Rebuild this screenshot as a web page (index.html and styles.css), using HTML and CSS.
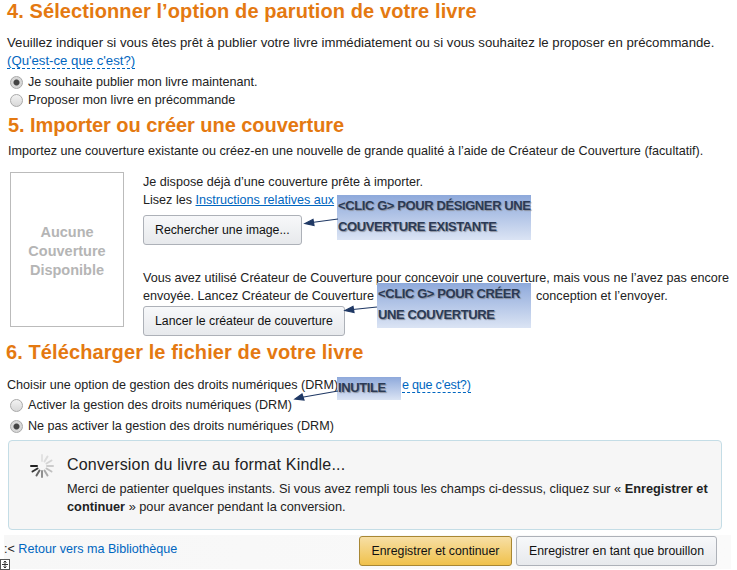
FILE: index.html
```html
<!DOCTYPE html>
<html>
<head>
    <meta charset="utf-8">
    <title>Publier votre livre</title>
    <link rel="stylesheet" href="styles.css">
</head>
<body>
    <div class="page">
        <h2 class="step step-four">4. Sélectionner l’option de parution de votre livre</h2>
        <p class="intro">Veuillez indiquer si vous êtes prêt à publier votre livre immédiatement ou si vous souhaitez le proposer en précommande.<br><a class="help" href="#">(Qu'est-ce que c'est?)</a></p>
        <label class="option"><span class="radio checked"></span>Je souhaite publier mon livre maintenant.</label>
        <label class="option"><span class="radio"></span>Proposer mon livre en précommande</label>

        <h2 class="step step-five">5. Importer ou créer une couverture</h2>
        <p class="intro-cover">Importez une couverture existante ou créez-en une nouvelle de grande qualité à l’aide de Créateur de Couverture (facultatif).</p>
        <div class="cover-row">
            <div class="cover-box">Aucune<br>Couverture<br>Disponible</div>
            <div class="cover-actions">
                <p>Je dispose déjà d’une couverture prête à importer.<br>Lisez les <a class="link" href="#">Instructions relatives aux</a></p>
                <button class="btn">Rechercher une image...</button>
                <p class="second">Vous avez utilisé Créateur de Couverture pour concevoir une couverture, mais vous ne l’avez pas encore<br>envoyée. Lancez Créateur de Couverture<span class="gap gap-create"></span>conception et l’envoyer.</p>
                <button class="btn btn-create">Lancer le créateur de couverture</button>
            </div>
        </div>

        <h2 class="step step-six">6. Télécharger le fichier de votre livre</h2>
        <p class="intro-drm">Choisir une option de gestion des droits numériques (DRM)<span class="gap gap-drm"></span><a class="help help-cut" href="#">e que c'est?)</a></p>
        <label class="option"><span class="radio"></span>Activer la gestion des droits numériques (DRM)</label>
        <label class="option option-last"><span class="radio checked"></span>Ne pas activer la gestion des droits numériques (DRM)</label>

        <div class="notice">
            <svg class="spinner" width="26" height="26" viewBox="0 0 26 26">
                <g stroke-width="2" stroke-linecap="round" fill="none">
                    <path d="M13 2v6" stroke="#e2e2e2"/>
                    <path d="M18.5 3.5l-3 5" stroke="#dcdcdc"/>
                    <path d="M22.5 7.500l-5 3" stroke="#d4d4d4"/>
                    <path d="M24 13h-6" stroke="#cccccc"/>
                    <path d="M22.500 18.500l-5-3" stroke="#c0c0c0"/>
                    <path d="M18.500 22.500l-3-5" stroke="#aaaaaa"/>
                    <path d="M13 24v-6" stroke="#909090"/>
                    <path d="M7.500 22.500l3-5" stroke="#666666"/>
                    <path d="M3.500 18.500l5-3" stroke="#333333"/>
                    <path d="M2 13h6" stroke="#222222"/>
                </g>
            </svg>
            <div class="notice-body">
                <h3>Conversion du livre au format Kindle...</h3>
                <p>Merci de patienter quelques instants. Si vous avez rempli tous les champs ci-dessus, cliquez sur « <b>Enregistrer et</b> <b>continuer</b> » pour avancer pendant la conversion.</p>
            </div>
        </div>

        <div class="footer">
            <span class="back">:&lt; <a href="#">Retour vers ma Bibliothèque</a></span>
            <button class="btn btn-primary">Enregistrer et continuer</button>
            <button class="btn btn-draft">Enregistrer en tant que brouillon</button>
        </div>

        <div class="callout callout-design">&lt;CLIC G&gt; POUR DÉSIGNER UNE<br>COUVERTURE EXISTANTE</div>
        <div class="callout callout-create">&lt;CLIC G&gt; POUR CRÉER<br>UNE COUVERTURE</div>
        <div class="callout callout-useless">INUTILE</div>

        <svg class="arrows" width="737" height="570" viewBox="0 0 737 570">
            <g stroke="#1f3864" fill="#1f3864" stroke-width="1.200">
                <path d="M338 219L308 223"/>
                <path d="M305 223.500l8-4 1 6z"/>
                <path d="M377 307L348 310"/>
                <path d="M345 310.500l8-4 1 6z"/>
                <path d="M338 391L298 398"/>
                <path d="M295 399l7-5 2 6z"/>
            </g>
        </svg>
        <svg class="move-handle" width="10" height="11" viewBox="0 0 10 11">
            <rect x="0.500" y="0.500" width="9" height="10" fill="#fff" stroke="#555"/>
            <path d="M5 2v7M2 5.500h6M3.500 3.500L5 2l1.500 1.500M3.500 7.500L5 9l1.500-1.500" stroke="#333" fill="none"/>
        </svg>
    </div>
</body>
</html>
```
FILE: styles.css
```css
* {
    margin: 0;
    padding: 0;
    box-sizing: border-box;
}
body {
    background: #fff;
    font-family: "Liberation Sans", Arial, sans-serif;
    font-size: 12.6px;
    color: #222;
}
.page {
    position: relative;
    width: 737px;
    height: 570px;
    overflow: hidden;
    padding: 0 0 0 7px;
    line-height: 18px;
}
.step {
    color: #e47911;
    font-size: 20px;
    line-height: 22px;
    font-weight: bold;
    letter-spacing: 0.1px;
}
.step-five {
    margin-top: 5px;
    margin-left: 1px;
    letter-spacing: -0.05px;
}
.step-six {
    margin-top: 5px;
    margin-left: -1px;
}
.intro {
    margin-top: 12px;
    margin-bottom: 3px;
    font-size: 13.2px;
}
.intro-cover {
    margin: 6px 0 0 1px;
}
.intro-drm {
    margin: 13px 0 2px;
    height: 18px;
    white-space: nowrap;
}
.help {
    color: #0066c0;
    text-decoration: none;
    border-bottom: 1px dashed #0066c0;
}
.help-cut {
    letter-spacing: -0.25px;
}
.link {
    color: #0066c0;
}
.gap {
    display: inline-block;
}
.gap-create {
    width: 162px;
}
.gap-drm {
    width: 64px;
}
.option {
    display: flex;
    align-items: center;
    height: 18px;
}
.option-last {
    margin-top: 3px;
}
.radio {
    width: 13px;
    height: 13px;
    margin: 0 5px 0 3px;
    border-radius: 50%;
    border: 1px solid #a9a9a9;
    background: linear-gradient(#f2f2f2, #d8d8d8);
    flex: none;
}
.radio.checked {
    background: radial-gradient(circle, #444 0, #444 2.5px, #d8d8d8 3.5px);
}
.cover-row {
    display: flex;
    margin: 12px 0 0 3px;
}
.cover-box {
    width: 114px;
    height: 155px;
    padding-top: 4px;
    border: 1px solid #bbb;
    display: flex;
    align-items: center;
    justify-content: center;
    text-align: center;
    color: #b5b5b5;
    font-size: 14.5px;
    line-height: 19px;
    font-weight: bold;
}
.cover-actions {
    margin-left: 19px;
    padding-top: 1px;
    width: 594px;
}
.btn {
    display: block;
    height: 30px;
    padding: 0 11px;
    font-family: inherit;
    font-size: 12.3px;
    color: #111;
    border: 1px solid #adb1b8;
    border-radius: 3px;
    background: linear-gradient(#f7f8fa, #e7e9ec);
}
.cover-actions .btn {
    margin-top: 6px;
}
.cover-actions .btn-create {
    margin-top: 1px;
}
.cover-actions .second {
    margin-top: 24px;
    white-space: nowrap;
}
.notice {
    display: flex;
    width: 714px;
    height: 90px;
    margin: 5px 0 0 1px;
    padding: 12px 10px 0 20px;
    background: #f6f6f6;
    border: 1px solid #c4dde6;
    border-radius: 4px;
}
.spinner {
    flex: none;
    margin: 0 12px 0 0;
}
.notice-body h3 {
    font-size: 16px;
    line-height: 24px;
    font-weight: normal;
    letter-spacing: 0.18px;
}
.notice-body p {
    margin-top: 3px;
    font-size: 12.75px;
}
.footer {
    display: flex;
    align-items: center;
    height: 34px;
    margin: 5px 0 0 -3px;
    width: 727px;
    padding-bottom: 2px;
    background: linear-gradient(90deg, #f7f7f7, #fafafa);
}
.back {
    flex: 1;
    padding-bottom: 4px;
}
.back a {
    color: #0066c0;
    text-decoration: none;
}
.btn-primary {
    width: 153px;
    padding: 0;
    background: linear-gradient(#f7dfa5, #f0c14b);
    border-color: #a88734;
}
.btn-draft {
    width: 201px;
    padding: 0;
    margin: 0 14px 0 4px;
}
.callout {
    position: absolute;
    padding-left: 1px;
    font-size: 13px;
    font-weight: bold;
    letter-spacing: -0.4px;
    color: #2b3a55;
    text-shadow: 1px 1px 1px #8a8f9c;
    background: linear-gradient(#8ea9db, #dbe4f4);
    white-space: nowrap;
}
.callout-design {
    left: 337px;
    top: 195px;
    width: 194px;
    height: 45px;
    line-height: 21px;
}
.callout-create {
    left: 377px;
    top: 283px;
    width: 154px;
    height: 45px;
    line-height: 21px;
}
.callout-useless {
    left: 337px;
    top: 377px;
    width: 64px;
    height: 23px;
    line-height: 21px;
}
.arrows {
    position: absolute;
    left: 0;
    top: 0;
    pointer-events: none;
}
.move-handle {
    position: absolute;
    left: 0;
    top: 559px;
}
```
